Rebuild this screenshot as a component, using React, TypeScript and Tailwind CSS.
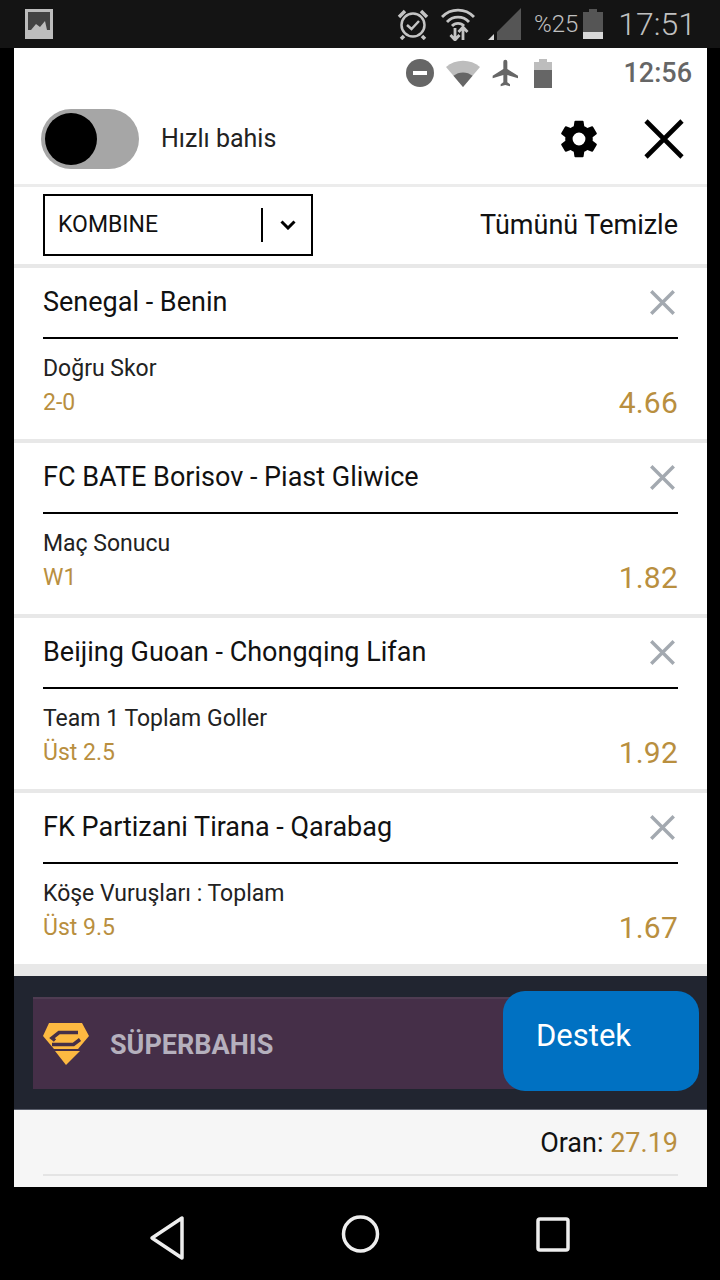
const bets = [
  { match: "Senegal - Benin", market: "Doğru Skor", pick: "2-0", odd: "4.66" },
  { match: "FC BATE Borisov - Piast Gliwice", market: "Maç Sonucu", pick: "W1", odd: "1.82" },
  { match: "Beijing Guoan - Chongqing Lifan", market: "Team 1 Toplam Goller", pick: "Üst 2.5", odd: "1.92" },
  { match: "FK Partizani Tirana - Qarabag", market: "Köşe Vuruşları : Toplam", pick: "Üst 9.5", odd: "1.67" },
];

const CloseIcon = ({ size, color, width }: { size: number; color: string; width: number }) => (
  <svg width={size} height={size} viewBox="0 0 40 40" fill="none" stroke={color} strokeWidth={width}>
    <path d="M2 2L38 38M38 2L2 38" />
  </svg>
);

const BetCard = ({ bet }: { bet: (typeof bets)[number] }) => (
  <div className="h-[171px] bg-white px-[29px] mb-[4px]">
    <div className="h-[71px] flex items-center justify-between border-b-2 border-black">
      <span className="text-[27px] text-[#111]">{bet.match}</span>
      <div className="mr-[3px] -mt-[1px]">
        <CloseIcon size={25} color="#a3a9b0" width={5.5} />
      </div>
    </div>
    <div className="pt-[15px] text-[23px] leading-[30px] text-[#222]">{bet.market}</div>
    <div className="flex items-center justify-between h-[36px] mt-[1px]">
      <span className="text-[23px] text-[#b98f3f]">{bet.pick}</span>
      <span className="text-[30px] text-[#b98f3f] tracking-[0.2px] -mt-[2px]">{bet.odd}</span>
    </div>
  </div>
);

export default function App() {
  return (
    <div className="relative w-[720px] h-[1280px] bg-black flex flex-col font-['Roboto',sans-serif] overflow-hidden">
      {/* telefon status bar */}
      <div className="h-[48px] bg-[#141414] flex items-center pl-[25px] pr-[24px] text-[#b8b8b8]">
        <svg width="28" height="30" viewBox="0 0 28 30">
          <rect x="1.500" y="1.500" width="25" height="27" fill="#444" stroke="#bdbdbd" strokeWidth="3" />
          <rect x="3" y="21" width="22" height="6" fill="#bdbdbd" />
          <path d="M6 21 L11 15 L15 18 L20 12 L22 21 Z" fill="#bdbdbd" />
        </svg>
        <div className="ml-auto flex items-center">
          <svg width="32" height="32" viewBox="0 0 32 32" fill="none" stroke="#c4c4c4" strokeWidth="2.500">
            <circle cx="16" cy="17" r="11.500" />
            <path d="M10 17l4.500 4 7.500-8" />
            <path d="M2 9l6-6M30 9l-6-6M7 28l-3 3M25 28l3 3" strokeWidth="3.500" />
          </svg>
          <svg width="34" height="34" viewBox="0 0 34 34" fill="none" stroke="#c4c4c4" strokeWidth="2.800" className="ml-[12px]">
            <path d="M1 10a22 22 0 0 1 32 0" />
            <path d="M6 15a15 15 0 0 1 22 0" />
            <path d="M11 19a8 8 0 0 1 12 0" />
            <path d="M14 21v12M9.500 28l4.500 5 4.500-5M22 33V20M17.500 25l4.500-5 4.500 5" strokeWidth="2.800" />
          </svg>
          <svg width="33" height="32" viewBox="0 0 33 32" className="ml-[13px]">
            <path d="M33 0V32H9V24Z" fill="#555" />
            <path d="M0 32L6 26V32Z" fill="#d8d8d8" />
          </svg>
          <span className="ml-[13px] text-[24px] font-light text-[#c0c0c0]">%25</span>
          <svg width="20" height="30" viewBox="0 0 20 30" className="ml-[5px]">
            <rect x="6" y="0" width="8" height="3" fill="#555" />
            <rect x="0" y="3" width="20" height="20" fill="#555" />
            <rect x="0" y="23" width="20" height="7" fill="#d8d8d8" />
          </svg>
          <span className="ml-[15px] text-[32px] font-light text-[#c0c0c0]">17:51</span>
        </div>
      </div>

      <div className="ml-[14px] mr-[13px] flex-1 flex flex-col bg-white">
        {/* ic status bar */}
        <div className="h-[50px] flex items-center justify-end pr-[15px]">
          <svg width="28" height="28" viewBox="0 0 28 28">
            <circle cx="14" cy="14" r="14" fill="#666" />
            <rect x="7" y="12" width="14" height="4" fill="#fff" />
          </svg>
          <svg width="34" height="28" viewBox="0 0 34 28" className="ml-[12px]">
            <path d="M0 8 A26 26 0 0 1 34 8 L17 28 Z" fill="#bdbdbd" />
            <path d="M7.500 16.800 A15 15 0 0 1 26.500 16.800 L17 28 Z" fill="#666" />
          </svg>
          <svg width="32" height="32" viewBox="0 0 24 24" fill="#666" className="ml-[10px]">
            <path d="M21 16v-2l-8-5V3.500a1.500 1.500 0 0 0-3 0V9l-8 5v2l8-2.500V19l-2 1.500V22l3.500-1 3.500 1v-1.500L13 19v-5.500l8 2.500z" />
          </svg>
          <svg width="20" height="29" viewBox="0 0 20 29" className="ml-[11px]">
            <rect x="6" y="0" width="8" height="3" fill="#bdbdbd" />
            <rect x="1" y="3" width="18" height="8" fill="#bdbdbd" />
            <rect x="1" y="11" width="18" height="18" fill="#666" />
          </svg>
          <span className="ml-[70px] text-[27px] font-medium text-[#666]">12:56</span>
        </div>

        {/* hizli bahis satiri */}
        <div className="h-[89px] flex items-center pl-[27px] pr-[23px] pb-[4px] border-b-[3px] border-[#ececec]">
          <div className="w-[98px] h-[60px] rounded-full bg-[#a6a6a6] flex items-center pl-[4px]">
            <div className="w-[52px] h-[52px] rounded-full bg-black" />
          </div>
          <span className="ml-[22px] text-[25px] text-[#222]">Hızlı bahis</span>
          <svg width="44" height="44" viewBox="0 0 24 24" fill="#000" className="ml-auto">
            <path fillRule="evenodd" d="M19.430 12.980c.04-.32.07-.64.07-.98s-.03-.66-.07-.98l2.110-1.650a.5.5 0 0 0 .12-.64l-2-3.460a.5.5 0 0 0-.61-.22l-2.490 1a7.300 7.300 0 0 0-1.690-.98l-.38-2.650A.49.49 0 0 0 14 2h-4a.49.49 0 0 0-.49.42l-.38 2.650c-.61.25-1.170.59-1.690.98l-2.490-1a.49.49 0 0 0-.61.22l-2 3.460a.49.49 0 0 0 .12.64l2.110 1.650c-.04.32-.07.65-.07.98s.03.66.07.98l-2.110 1.650a.5.5 0 0 0-.12.64l2 3.460c.12.22.39.3.61.22l2.490-1c.52.4 1.080.73 1.690.98l.38 2.650c.03.24.24.42.49.42h4c.25 0 .46-.18.49-.42l.38-2.650c.61-.25 1.170-.59 1.690-.98l2.490 1c.23.09.49 0 .61-.22l2-3.460a.5.5 0 0 0-.12-.64zM12 15.500a3.500 3.500 0 1 1 0-7 3.500 3.500 0 0 1 0 7z" />
          </svg>
          <div className="ml-[43px]">
            <CloseIcon size={40} color="#000" width={4.6} />
          </div>
        </div>

        {/* kombine satiri */}
        <div className="h-[81px] flex items-center justify-between pl-[29px] pr-[29px] border-b-[4px] border-[#e8e8e8]">
          <div className="w-[270px] h-[62px] -mt-[2px] border-2 border-black flex items-center pl-[13px]">
            <span className="text-[23px] text-[#111] w-[203px] pt-[2px]">KOMBINE</span>
            <div className="w-[2px] h-[34px] bg-black" />
            <svg width="16" height="10" viewBox="0 0 16 10" fill="none" stroke="#000" strokeWidth="3" className="ml-[17px]">
              <path d="M1.500 1.500L8 8l6.500-6.500" />
            </svg>
          </div>
          <span className="text-[27px] text-[#111]">Tümünü Temizle</span>
        </div>

        <div className="flex flex-col bg-[#e8e8e8]">
          {bets.map((bet) => (
            <BetCard key={bet.match} bet={bet} />
          ))}
        </div>

        <div className="h-[8px] bg-[#e8e8e8]" />

        {/* reklam bandi */}
        <div className="h-[134px] bg-[#212530] border-b border-[#5a5e6b] pt-[21px] pl-[19px]">
          <div className="w-[490px] h-[92px] bg-[#452f48] border-t-2 border-[#4f3c52] flex items-center pl-[10px]">
            <svg width="46" height="42" viewBox="0 0 46 42">
              <path d="M6 0H39L46 13L35 26H11L0 13Z" fill="#fdb941" />
              <path d="M12 28H37L23 42Z" fill="#fdb941" />
              <path d="M35 9.500H16L9 15L12 17.500" fill="none" stroke="#452f48" strokeWidth="3.500" />
              <path d="M37 16.500L30.500 21.500H9" fill="none" stroke="#452f48" strokeWidth="3.500" />
            </svg>
            <span className="ml-[21px] pt-[2px] text-[27px] font-bold text-[#b5b0bd]">SÜPERBAHIS</span>
          </div>
        </div>

        {/* oran */}
        <div className="h-[77px] bg-[#f6f6f6] px-[29px] flex flex-col">
          <div className="h-[64px] pt-[2px] flex items-center justify-end text-[27px] text-[#111]">
            Oran:&nbsp;<span className="text-[#b98f3f]">27.19</span>
          </div>
          <div className="h-[2px] bg-[#e4e4e4]" />
        </div>
      </div>

      {/* alt navigasyon */}
      <div className="h-[93px] flex items-center">
        <svg width="720" height="93" viewBox="0 0 720 93" fill="none" stroke="#eee" strokeWidth="3.500">
          <path d="M182 31V71L152 51Z" strokeLinejoin="round" />
          <circle cx="360.500" cy="47" r="17" />
          <rect x="538" y="32" width="30" height="31" rx="2" />
        </svg>
      </div>

      {/* destek butonu */}
      <div className="absolute left-[503px] top-[991px] w-[196px] h-[100px] rounded-[22px] bg-[#0071c2] pl-[33px] pt-[26px] text-[31px] leading-[38px] text-white">
        Destek
      </div>
    </div>
  );
}
